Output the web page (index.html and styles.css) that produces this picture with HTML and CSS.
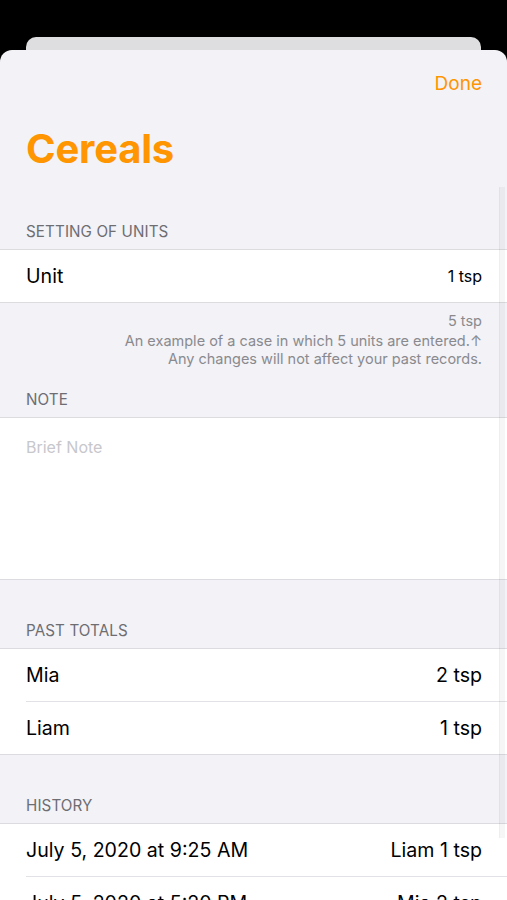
FILE: index.html
```html
<!DOCTYPE html>
<html>
  <head>
    <meta charset="UTF-8" />
    <meta name="viewport" content="width=device-width, initial-scale=1" />
    <title>Cereals</title>
    <link rel="stylesheet" href="styles.css">
  </head>
  <body>
    <div class="back-card"></div>
    <div class="sheet">
      <div class="nav">
        <span class="done">Done</span>
      </div>
      <h1 class="title">Cereals</h1>

      <div class="section-header first">SETTING OF UNITS</div>
      <div class="group">
        <div class="row">
          <span>Unit</span>
          <span class="small-value">1 tsp</span>
        </div>
      </div>
      <div class="section-footer">
        <div class="footer-top">5 tsp</div>
        <div>An example of a case in which 5 units are entered.&#8593;</div>
        <div>Any changes will not affect your past records.</div>
      </div>

      <div class="section-header note-header">NOTE</div>
      <div class="group">
        <div class="note">Brief Note</div>
      </div>

      <div class="section-header">PAST TOTALS</div>
      <div class="group">
        <div class="row">
          <span>Mia</span>
          <span>2 tsp</span>
        </div>
        <div class="row">
          <span>Liam</span>
          <span>1 tsp</span>
        </div>
      </div>

      <div class="section-header">HISTORY</div>
      <div class="group">
        <div class="row">
          <span>July 5, 2020 at 9:25 AM</span>
          <span>Liam 1 tsp</span>
        </div>
        <div class="row">
          <span>July 5, 2020 at 5:20 PM</span>
          <span>Mia 2 tsp</span>
        </div>
      </div>

      <div class="scroll-indicator"></div>
    </div>
  </body>
</html>
```

FILE: styles.css
```css
/* Base */
html, body {
  margin: 0;
  padding: 0;
  height: 100%;
}

body {
  background: #000;
  font-family: Inter, "Noto Sans", sans-serif;
  overflow: hidden;
}

/* Card peeking behind the sheet */
.back-card {
  height: 13px;
  margin: 37px 26px 0;
  background: #dedee0;
  border-radius: 10px 10px 0 0;
}

/* Main sheet */
.sheet {
  position: relative;
  background: #f2f2f7;
  border-radius: 12px 12px 0 0;
  height: 850px;
  overflow: hidden;
}

.nav {
  display: flex;
  justify-content: flex-end;
  padding: 22px 25px 0;
}

.done {
  color: #ff9500;
  font-size: 19px;
  line-height: 24px;
}

.title {
  margin: 30px 0 0 26px;
  color: #ff9500;
  font-size: 40px;
  line-height: 45px;
  font-weight: 700;
  letter-spacing: -0.2px;
}

/* Section headers */
.section-header {
  padding: 42px 26px 8px;
  color: #6d6d72;
  font-size: 15.2px;
  line-height: 18px;
  letter-spacing: 0.1px;
}

.section-header.first {
  padding-top: 52px;
}

.section-header.note-header {
  padding-top: 23px;
}

/* Grouped list */
.group {
  background: #fff;
  border-top: 1px solid #dcdce0;
  border-bottom: 1px solid #dcdce0;
}

.row {
  display: flex;
  justify-content: space-between;
  align-items: center;
  height: 52px;
  margin-left: 26px;
  padding-right: 25px;
  font-size: 19.6px;
  color: #000;
}

.row + .row {
  border-top: 1px solid #e2e2e6;
}

.small-value {
  font-size: 16px;
}

/* Footer text under units */
.section-footer {
  padding: 9px 25px 0;
  text-align: right;
  color: #8a8a8e;
  font-size: 14.5px;
  line-height: 18px;
}

.footer-top {
  margin-bottom: 2px;
}

/* Note box */
.note {
  height: 161px;
  box-sizing: border-box;
  padding: 19px 26px 0;
  color: #c7c7cc;
  font-size: 16px;
  line-height: 20px;
}

/* Scroll indicator over content */
.scroll-indicator {
  position: absolute;
  top: 137px;
  right: 2px;
  width: 5px;
  height: 651px;
  background: rgba(0, 0, 0, 0.035);
  border-left: 1px solid rgba(0, 0, 0, 0.03);
}
```
